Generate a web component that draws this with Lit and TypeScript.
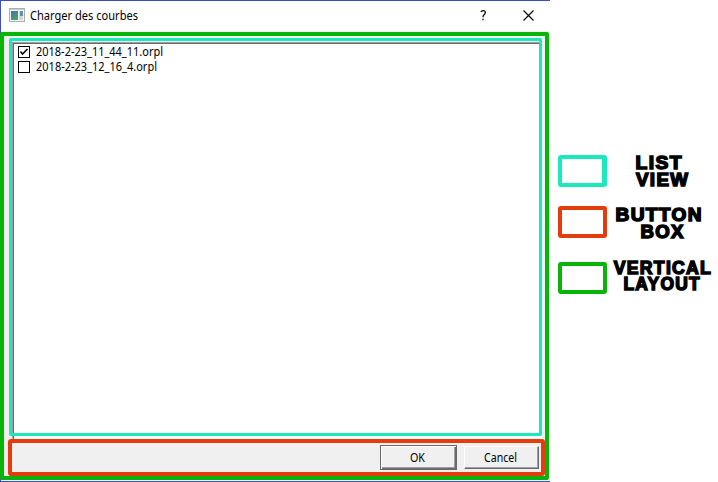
import { LitElement, html, css, svg } from "lit";
import { customElement, property } from "lit/decorators.js";

@customElement("legend-entry")
class LegendEntry extends LitElement {
  @property() color = "";
  @property({ attribute: false }) lines: { text: string; x: number; y: number; w: number }[] = [];
  static styles = css`
    :host { display: block; height: 32px; width: 160px; }
    .row { display: flex; height: 32px; }
    .swatch { box-sizing: border-box; flex: none; width: 49px; height: 32px; border: 4px solid; border-radius: 3px; }
    .cyan { border-color: #19e9bd; border-right-width: 5px; }
    .red { border-color: #e43c0c; }
    .green { border-color: #08b408; }
    svg { flex: none; overflow: visible; width: 111px; height: 32px; }
    text { font: bold 18px/1 "Liberation Sans", Arial, sans-serif; letter-spacing: 1.3px; fill: #000; stroke: #000; stroke-width: 1.5px; }
  `;
  render() {
    return html`<div class="row"><div class="swatch ${this.color}"></div>
      <svg viewBox="0 0 111 32">${this.lines.map((l) => svg`<text x=${l.x} y=${l.y} textLength=${l.w + 1.3} lengthAdjust="spacingAndGlyphs">${l.text}</text>`)}</svg></div>`;
  }
}

@customElement("app-root")
class AppRoot extends LitElement {
  static styles = css`
    :host { display: flex; width: 718px; height: 482px; background: #fff; overflow: hidden; color: #000; font: 12px/15px "Noto Sans", "Open Sans", sans-serif; }
    * { box-sizing: border-box; }
    .window { position: relative; flex: none; width: 550px; height: 482px; border: 1px solid #3c50b8; border-right: 0; display: flex; flex-direction: column; background: #f0f0f0; }
    .title { height: 30px; flex: none; background: #fff; display: flex; align-items: center; padding: 0 0 2px 8px; }
    .title svg { flex: none; }
    .name { margin-left: 5px; flex: 1; }
    .fit { display: block; overflow: visible; font: 12px "Noto Sans", "Open Sans", sans-serif; }
    .help { margin-right: 36px; }
    .close { margin-right: 16px; }
    .list { margin: 11px 8px 0 11px; height: 397px; background: #fff; border: 1px solid #a0a0a0; border-width: 1px 0 0 1px; box-shadow: inset 1px 1px #696969; padding: 1px 0 0 5px; flex: none; }
    .item { display: flex; height: 15px; align-items: center; gap: 6px; }
    .check { width: 12px; height: 12px; flex: none; }
    .buttons { display: flex; gap: 7px; margin: 6px 11px 0 0; justify-content: flex-end; align-items: center; }
    .button { width: 75px; height: 23px; display: flex; align-items: center; justify-content: center; padding-right: 2px; border: 1px solid; border-color: #fff #696969 #696969 #fff; box-shadow: inset -1px -1px #a0a0a0; }
    .default { width: 77px; height: 25px; border-color: #696969; box-shadow: inset 1px 1px #fff, inset -1px -1px #696969, inset -2px -2px #a0a0a0; }
    .frame { position: absolute; border-style: solid; border-radius: 3px; }
    .layout { left: -1px; top: 31px; width: 549px; height: 448px; border: 4px solid #08b408; border-radius: 2px; }
    .view { left: 8px; top: 37px; width: 533px; height: 398px; border: 3px solid #19e9bd; border-radius: 2px; }
    .box { left: 7px; top: 438px; width: 537px; height: 37px; border: 4px solid #e43c0c; }
    .legend { display: flex; flex-direction: column; padding: 155px 0 0 8px; }
    .second { margin-top: 19px; }
    .third { margin-top: 24px; }
  `;
  label(text: string, w: number) {
    return svg`<svg class="fit" width=${w} height="15"><text x="0" y="12" textLength=${w} lengthAdjust="spacingAndGlyphs">${text}</text></svg>`;
  }
  item(text: string, w: number, on: boolean) {
    return html`<div class="item"><svg class="check" viewBox="0 0 12 12">
      <rect x=".5" y=".5" width="11" height="11" fill="#fff" stroke="#000" />
      ${on ? svg`<path d="M2.5 5.5 4.5 8 9.5 3" fill="none" stroke="#000" stroke-width="1.6" />` : ""}</svg>${this.label(text, w)}</div>`;
  }
  render() {
    return html`
      <div class="window">
        <div class="title">
          <svg width="16" height="14" viewBox="0 0 16 14">
            <defs><linearGradient id="g" x2="0.4" y2="1"><stop stop-color="#4070a8" /><stop offset="1" stop-color="#50a070" /></linearGradient></defs>
            <rect x=".5" y=".5" width="15" height="13" fill="#f4f4f4" stroke="#a8aeb2" />
            <path d="M1 1.5h14" stroke="#c4ccd2" />
            <rect x="2" y="3" width="7" height="9" fill="url(#g)" />
            <rect x="10" y="3" width="4" height="9" fill="#d0d8da" /><rect x="11" y="3" width="3" height="5" fill="#6890a0" />
          </svg>
          <div class="name">${this.label("Charger des courbes", 108)}</div>
          <svg class="help" width="7" height="11" viewBox="0 0 7 11"><path d="M1 2Q1.4.7 3.2.7 5.3.7 5.3 2.6 5.3 3.9 4 4.8 3 5.6 3 7.2M3 8.7v1.5" fill="none" stroke="#000" stroke-width="1.3" /></svg>
          <svg class="close" width="11" height="11" viewBox="0 0 11 11"><path d="M.5.5l10 10M10.5.5l-10 10" stroke="#000" stroke-width="1.1" /></svg>
        </div>
        <div class="list">
          ${this.item("2018-2-23_11_44_11.orpl", 127, true)}
          ${this.item("2018-2-23_12_16_4.orpl", 121, false)}
        </div>
        <div class="buttons">
          <div class="button default">${this.label("OK", 15)}</div>
          <div class="button">${this.label("Cancel", 33)}</div>
        </div>
        <div class="frame layout"></div>
        <div class="frame view"></div>
        <div class="frame box"></div>
      </div>
      <div class="legend">
        <legend-entry color="cyan" .lines=${[{ text: "LIST", x: 28.5, y: 14, w: 46 }, { text: "VIEW", x: 29, y: 30.6, w: 52 }]}></legend-entry>
        <legend-entry class="second" color="red" .lines=${[{ text: "BUTTON", x: 8.5, y: 15, w: 86 }, { text: "BOX", x: 33.5, y: 31.5, w: 43 }]}></legend-entry>
        <legend-entry class="third" color="green" .lines=${[{ text: "VERTICAL", x: 6.8, y: 11.5, w: 97 }, { text: "LAYOUT", x: 16.5, y: 28, w: 76 }]}></legend-entry>
      </div>`;
  }
}
